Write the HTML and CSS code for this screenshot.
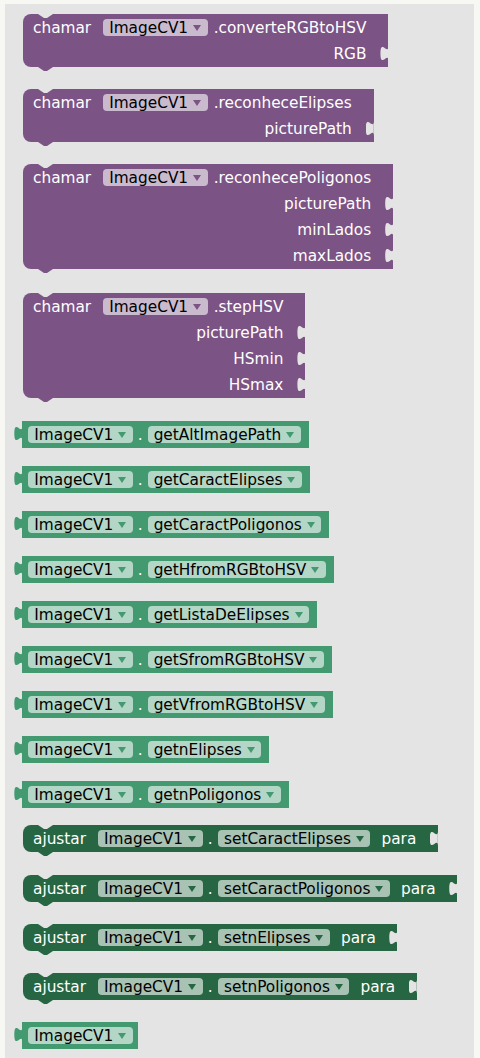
FILE: index.html
```html
<!DOCTYPE html>
<html>
<head>
<meta charset="utf-8">
<link rel="stylesheet" href="styles.css">
</head>
<body>
<div class="ws">
  <div class="block call m10">
    <div class="row"><span class="kw">chamar</span><span class="pill">ImageCV1<i class="arr"></i></span><span class="meth">.converteRGBtoHSV</span></div>
    <div class="row in">RGB<i class="sock"></i></div>
  </div>
  <div class="block call m22">
    <div class="row"><span class="kw">chamar</span><span class="pill">ImageCV1<i class="arr"></i></span><span class="meth">.reconheceElipses</span></div>
    <div class="row in">picturePath<i class="sock"></i></div>
  </div>
  <div class="block call m22">
    <div class="row"><span class="kw">chamar</span><span class="pill">ImageCV1<i class="arr"></i></span><span class="meth">.reconhecePoligonos</span></div>
    <div class="row in">picturePath<i class="sock"></i></div>
    <div class="row in">minLados<i class="sock"></i></div>
    <div class="row in">maxLados<i class="sock"></i></div>
  </div>
  <div class="block call m24">
    <div class="row"><span class="kw">chamar</span><span class="pill">ImageCV1<i class="arr"></i></span><span class="meth">.stepHSV</span></div>
    <div class="row in">picturePath<i class="sock"></i></div>
    <div class="row in">HSmin<i class="sock"></i></div>
    <div class="row in">HSmax<i class="sock"></i></div>
  </div>

  <div class="block get m23"><span class="pill">ImageCV1<i class="arr"></i></span><span class="dot">.</span><span class="pill">getAltImagePath<i class="arr"></i></span></div>
  <div class="block get m18"><span class="pill">ImageCV1<i class="arr"></i></span><span class="dot">.</span><span class="pill">getCaractElipses<i class="arr"></i></span></div>
  <div class="block get m18"><span class="pill">ImageCV1<i class="arr"></i></span><span class="dot">.</span><span class="pill">getCaractPoligonos<i class="arr"></i></span></div>
  <div class="block get m18"><span class="pill">ImageCV1<i class="arr"></i></span><span class="dot">.</span><span class="pill">getHfromRGBtoHSV<i class="arr"></i></span></div>
  <div class="block get m18"><span class="pill">ImageCV1<i class="arr"></i></span><span class="dot">.</span><span class="pill">getListaDeElipses<i class="arr"></i></span></div>
  <div class="block get m18"><span class="pill">ImageCV1<i class="arr"></i></span><span class="dot">.</span><span class="pill">getSfromRGBtoHSV<i class="arr"></i></span></div>
  <div class="block get m18"><span class="pill">ImageCV1<i class="arr"></i></span><span class="dot">.</span><span class="pill">getVfromRGBtoHSV<i class="arr"></i></span></div>
  <div class="block get m18"><span class="pill">ImageCV1<i class="arr"></i></span><span class="dot">.</span><span class="pill">getnElipses<i class="arr"></i></span></div>
  <div class="block get m18"><span class="pill">ImageCV1<i class="arr"></i></span><span class="dot">.</span><span class="pill">getnPoligonos<i class="arr"></i></span></div>

  <div class="block set m17"><span class="kw">ajustar</span><span class="pill">ImageCV1<i class="arr"></i></span><span class="dot">.</span><span class="pill">setCaractElipses<i class="arr"></i></span><span class="para">para</span><i class="sock"></i></div>
  <div class="block set m23"><span class="kw">ajustar</span><span class="pill">ImageCV1<i class="arr"></i></span><span class="dot">.</span><span class="pill">setCaractPoligonos<i class="arr"></i></span><span class="para">para</span><i class="sock"></i></div>
  <div class="block set m22"><span class="kw">ajustar</span><span class="pill">ImageCV1<i class="arr"></i></span><span class="dot">.</span><span class="pill">setnElipses<i class="arr"></i></span><span class="para">para</span><i class="sock"></i></div>
  <div class="block set m22"><span class="kw">ajustar</span><span class="pill">ImageCV1<i class="arr"></i></span><span class="dot">.</span><span class="pill">setnPoligonos<i class="arr"></i></span><span class="para">para</span><i class="sock"></i></div>

  <div class="block get comp m22"><span class="pill">ImageCV1<i class="arr"></i></span></div>
</div>
</body>
</html>
```
FILE: styles.css
```css
html, body {
  margin: 0;
  padding: 0;
  background: #f7f7f3;
  overflow: hidden;
}
.ws {
  margin: 4px 6px 0 5px;
  height: 1054px;
  background: #e4e4e4;
  padding-left: 18px;
  display: flex;
  flex-direction: column;
  align-items: flex-start;
  font-family: "DejaVu Sans", sans-serif;
  font-size: 15.33px;
  color: #fff;
}
.m10 { margin-top: 10px; }
.m17 { margin-top: 17px; }
.m18 { margin-top: 18px; }
.m22 { margin-top: 22px; }
.m23 { margin-top: 23px; }
.m24 { margin-top: 24px; }

.block {
  position: relative;
  background: var(--c);
  color: #fff;
  white-space: nowrap;
}
.call { --c: #7c5385; }
.get { --c: #439970; }
.set { --c: #266643; }

/* previous-statement notch and next-statement tab */
.call::before, .set::before {
  content: "";
  position: absolute;
  left: 15px;
  top: 0;
  width: 15px;
  height: 4px;
  background: #e4e4e4;
  clip-path: polygon(0 0, 6px 4px, 9px 4px, 15px 0);
}
.call::after, .set::after {
  content: "";
  position: absolute;
  left: 15px;
  top: 100%;
  width: 15px;
  height: 4px;
  background: var(--c);
  clip-path: polygon(0 0, 15px 0, 9px 4px, 6px 4px);
}

/* procedure call */
.call {
  border-radius: 8px 0 0 8px;
  padding: 0 22px 0 10px;
  display: flex;
  flex-direction: column;
  align-items: flex-end;
}
.call .row {
  position: relative;
  height: 26px;
  display: flex;
  align-items: center;
}
.call .row:first-child { height: 27px; }
.kw { margin-right: 12px; }
.meth { margin-left: 6px; }

/* empty socket for a value input on the right edge */
.sock {
  position: absolute;
  right: -22px;
  top: 5px;
  width: 8px;
  height: 15px;
  background: #e4e4e4;
  clip-path: path("M8,0 C8,10 0,-8 0,7.5 C0,23 8,5 8,15 Z");
}
.set .sock { right: 0; top: 6px; }

/* dropdown pill */
.pill {
  display: inline-flex;
  align-items: center;
  height: 17px;
  padding: 0 6.5px 0 6px;
  border-radius: 4px;
  background: rgba(255, 255, 255, 0.6);
  color: #000;
}
.arr {
  width: 0;
  height: 0;
  margin-left: 5px;
  border-left: 4px solid transparent;
  border-right: 4px solid transparent;
  border-top: 6px solid var(--c);
}
.dot { margin: 0 5px; }
.set .dot { margin: 0 5.3px; }

/* getter / component (output) */
.get {
  height: 27px;
  margin-left: -0.7px;
  padding: 0 8px 0 6px;
  display: flex;
  align-items: center;
}
.get::before {
  content: "";
  position: absolute;
  left: -8px;
  top: 5px;
  width: 8px;
  height: 15px;
  background: var(--c);
  clip-path: path("M8,0 C8,10 0,-8 0,7.5 C0,23 8,5 8,15 Z");
}
.comp { padding-right: 5.3px; }

/* setter */
.set {
  height: 27px;
  border-radius: 8px 0 0 8px;
  padding: 0 21.5px 0 10px;
  display: flex;
  align-items: center;
}
.set .kw { margin-right: 12px; }
.para { margin-left: 11px; }
```
